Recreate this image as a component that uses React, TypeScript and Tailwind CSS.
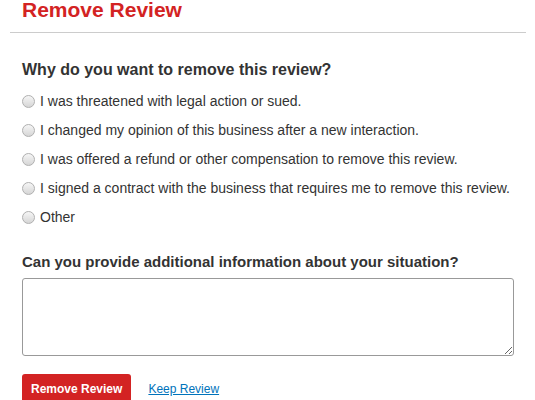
import { useState } from "react";

const reasons = [
  "I was threatened with legal action or sued.",
  "I changed my opinion of this business after a new interaction.",
  "I was offered a refund or other compensation to remove this review.",
  "I signed a contract with the business that requires me to remove this review.",
  "Other",
];

export default function App() {
  const [picked, setPicked] = useState<number | null>(null);
  const [info, setInfo] = useState("");

  return (
    <main className="w-[535px] h-[400px] overflow-hidden bg-white text-[#333] font-['Liberation_Sans',Arial,sans-serif]">
      <div className="mx-[10px] w-[516px]">
        <div className="px-3 pb-[12px] border-b border-[#ccc]">
          <h1 className="text-[21px] leading-[21px] font-bold text-[#d32323] -mt-[1px]">Remove Review</h1>
        </div>

        <div className="px-3 pt-[27px]">
          <h2 className="text-[16px] leading-[20px] font-bold mb-[7px]">Why do you want to remove this review?</h2>

          <ul className="flex flex-col">
            {reasons.map((r, i) => (
              <li key={r} className="h-[29px] flex items-center">
                <label className="flex items-center gap-[5px] text-[14px] cursor-pointer">
                  <input
                    type="radio"
                    name="reason"
                    className="sr-only"
                    checked={picked === i}
                    onChange={() => setPicked(i)}
                  />
                  <span className="w-[13px] h-[13px] rounded-full border border-[#b0b0b0] bg-gradient-to-b from-[#f6f6f6] to-[#d6d6d6] flex items-center justify-center">
                    {picked === i && <span className="w-[5px] h-[5px] rounded-full bg-[#333]" />}
                  </span>
                  <span>{r}</span>
                </label>
              </li>
            ))}
          </ul>

          <h3 className="text-[15px] leading-[18px] font-bold mt-[21px] mb-[7px]">
            Can you provide additional information about your situation?
          </h3>
          <textarea
            value={info}
            onChange={e => setInfo(e.target.value)}
            className="block w-[492px] h-[78px] border border-[#999] rounded-[3px] text-[13px] p-1"
          />

          <div className="flex items-center gap-[17px] mt-[18px]">
            <button className="h-[30px] px-[9px] rounded-[3px] bg-[#d32323] text-white text-[12px] font-bold">
              Remove Review
            </button>
            <a href="#" className="text-[12px] text-[#0073bb] underline">Keep Review</a>
          </div>
        </div>
      </div>
    </main>
  );
}
